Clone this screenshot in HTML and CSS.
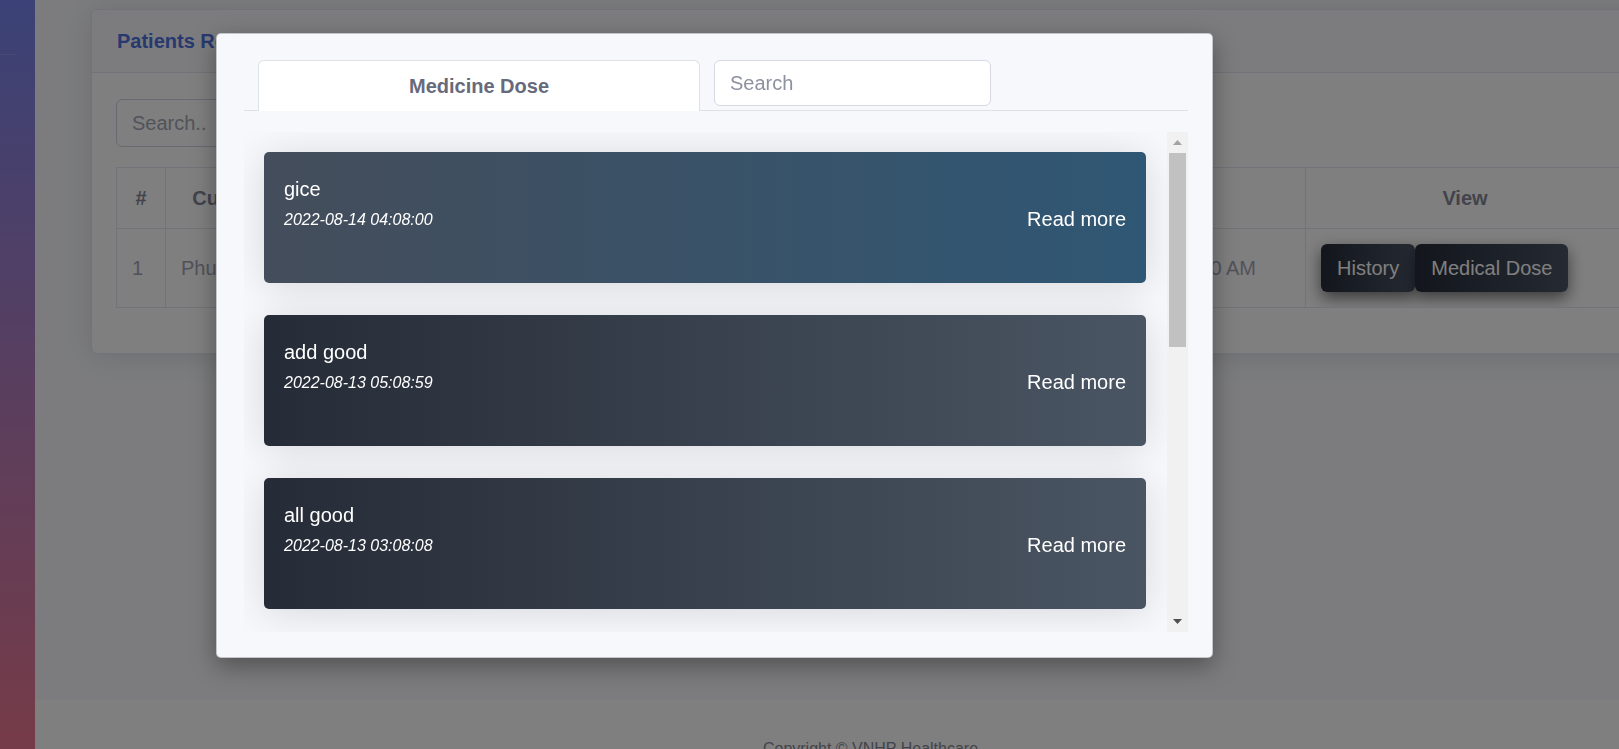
FILE: index.html
```html
<!DOCTYPE html>
<html lang="en">
<head>
<meta charset="utf-8">
<title>Patients Records</title>
<link rel="stylesheet" href="styles.css">
</head>
<body>
<div class="page">
  <aside class="sidebar"><hr class="sidebar-divider"></aside>
  <div class="main">
    <div class="content">
      <div class="card">
        <div class="card-header"><h6 class="card-title">Patients Records</h6></div>
        <div class="card-body">
          <input class="search-main" type="text" placeholder="Search..">
          <table class="table">
            <colgroup>
              <col class="col-idx"><col class="col-name"><col class="col-phone"><col class="col-date"><col class="col-view">
            </colgroup>
            <thead>
              <tr><th>#</th><th>Customer</th><th>Phone Number</th><th>Date</th><th>View</th></tr>
            </thead>
            <tbody>
              <tr>
                <td>1</td>
                <td>Phuong</td>
                <td>0901234567</td>
                <td>14/08/2022 10:08:00 AM</td>
                <td><div class="btn-group"><button class="btn">History</button><button class="btn">Medical Dose</button></div></td>
              </tr>
            </tbody>
          </table>
        </div>
      </div>
    </div>
    <footer class="footer"><span class="copyright">Copyright © VNHP Healthcare</span></footer>
  </div>
</div>

<div class="backdrop"></div>

<div class="modal">
  <div class="modal-nav">
    <div class="tab">Medicine Dose</div>
    <input class="modal-search" type="text" placeholder="Search">
  </div>
  <div class="dose-scroll">
    <div class="dose-list">
      <div class="dose-card dose-card--accent">
        <div class="dose-info"><div class="dose-title">gice</div><div class="dose-date">2022-08-14 04:08:00</div></div>
        <div class="dose-link">Read more</div>
      </div>
      <div class="dose-card">
        <div class="dose-info"><div class="dose-title">add good</div><div class="dose-date">2022-08-13 05:08:59</div></div>
        <div class="dose-link">Read more</div>
      </div>
      <div class="dose-card">
        <div class="dose-info"><div class="dose-title">all good</div><div class="dose-date">2022-08-13 03:08:08</div></div>
        <div class="dose-link">Read more</div>
      </div>
    </div>
    <div class="scrollbar">
      <div class="sb-btn"><svg width="9" height="5" viewBox="0 0 9 5"><polygon points="0,5 9,5 4.5,0" fill="#a3a3a3"/></svg></div>
      <div class="sb-track"><div class="sb-thumb"></div></div>
      <div class="sb-btn"><svg width="9" height="5" viewBox="0 0 9 5"><polygon points="0,0 9,0 4.5,5" fill="#505050"/></svg></div>
    </div>
  </div>
</div>
</body>
</html>
```
FILE: styles.css
```css
html, body {
  margin: 0;
  padding: 0;
}

body {
  overflow: hidden;
  font-family: "Liberation Sans", Arial, sans-serif;
  background: #f8f9fc;
  color: #858796;
}

.page {
  display: flex;
  width: 1706px;
  min-height: 749px;
}

.sidebar {
  width: 35px;
  flex: none;
  background: linear-gradient(180deg, #7684ee 0%, #f4768a 100%);
}

.sidebar-divider {
  margin: 54px 0 0;
  width: 16px;
  border: 0;
  border-top: 1px solid rgba(255, 255, 255, 0.15);
}

.main {
  width: 1671px;
  display: flex;
  flex-direction: column;
}

.content {
  height: 700px;
  padding-top: 9px;
  box-sizing: border-box;
}

.card {
  margin: 0 56px;
  background: #fff;
  border: 1px solid #e3e6f0;
  border-radius: 6px;
  box-shadow: 0 2px 28px rgba(58, 59, 69, 0.15);
}

.card-header {
  padding: 16px 25px 16px;
  background: #f8f9fc;
  border-bottom: 1px solid #e3e6f0;
  border-radius: 6px 6px 0 0;
}

.card-title {
  margin: 0;
  font-size: 20px;
  line-height: 30px;
  font-weight: 700;
  color: #4e73df;
}

.card-body {
  padding: 26px 24px 25px;
}

.search-main {
  display: block;
  width: 400px;
  height: 48px;
  box-sizing: border-box;
  padding: 0 15px;
  font-family: inherit;
  font-size: 20px;
  border: 1px solid #d1d3e2;
  border-radius: 6px;
  color: #6e707e;
  background: #fff;
}

.search-main::placeholder {
  color: #a4a6b4;
}

.table {
  width: 100%;
  margin-top: 20px;
  margin-bottom: 20px;
  border-collapse: collapse;
  table-layout: fixed;
  font-size: 20px;
  line-height: 30px;
}

.col-idx { width: 49px; }
.col-name { width: 147px; }
.col-phone { width: 710px; }
.col-date { width: 283px; }
.col-view { width: 319px; }

.table th,
.table td {
  border: 1px solid #e3e6f0;
  padding: 15px;
  vertical-align: middle;
  white-space: nowrap;
  overflow: hidden;
}

.table th {
  text-align: center;
  font-weight: 700;
  color: #858796;
}

.table td {
  text-align: left;
  color: #a2a4b3;
}

.btn-group {
  display: flex;
}

.btn {
  font-family: inherit;
  font-size: 20px;
  line-height: 24px;
  padding: 12px 16px;
  color: #fff;
  border: 0;
  border-radius: 6px;
  background: linear-gradient(90deg, #262c39 0%, #4a5466 100%);
  box-shadow: 0 6px 16px rgba(0, 0, 0, 0.55);
}

.footer {
  flex: 1;
  background: #fff;
  padding: 40px 0;
  text-align: center;
}

.copyright {
  font-size: 16px;
  line-height: 1;
  color: #858796;
}

/* modal */
.backdrop {
  position: fixed;
  inset: 0;
  background: rgba(0, 0, 0, 0.5);
}

.modal {
  position: fixed;
  left: 216px;
  top: 33px;
  width: 997px;
  height: 625px;
  box-sizing: border-box;
  padding: 26px 24px 25px 27px;
  display: flex;
  flex-direction: column;
  background: #f7f8fc;
  border: 1px solid rgba(0, 0, 0, 0.2);
  border-radius: 5px;
  box-shadow: 0 8px 24px rgba(0, 0, 0, 0.35);
}

.modal-nav {
  display: flex;
  align-items: flex-start;
  gap: 14px;
  height: 50px;
  padding-left: 14px;
  border-bottom: 1px solid #dee2e6;
}

.tab {
  width: 442px;
  height: 51px;
  box-sizing: border-box;
  margin-bottom: -1px;
  display: flex;
  align-items: center;
  justify-content: center;
  background: #fff;
  border: 1px solid #dee2e6;
  border-bottom: 0;
  border-radius: 6px 6px 0 0;
  font-size: 20px;
  font-weight: 700;
  color: #676a7b;
}

.modal-search {
  width: 277px;
  height: 46px;
  box-sizing: border-box;
  padding: 0 15px;
  font-family: inherit;
  font-size: 20px;
  border: 1px solid #d6d8e4;
  border-radius: 6px;
  background: #fff;
  color: #495057;
}

.modal-search::placeholder {
  color: #8e91a0;
}

.dose-scroll {
  margin-top: 21px;
  height: 500px;
  display: flex;
}

.dose-list {
  flex: 1;
  overflow: hidden;
  padding: 20px 21px 0 20px;
}

.dose-card {
  height: 131px;
  box-sizing: border-box;
  margin-bottom: 32px;
  padding: 22px 20px 20px;
  display: flex;
  justify-content: space-between;
  align-items: center;
  border-radius: 5px;
  color: #fff;
  background: linear-gradient(90deg, #262c37 0%, #4a5563 100%);
  box-shadow: 0 4px 40px rgba(0, 0, 0, 0.13);
}

.dose-card--accent {
  background: linear-gradient(90deg, #444d5b 0%, #2f5774 100%);
}

.dose-info {
  align-self: flex-start;
}

.dose-title {
  font-size: 20px;
  line-height: 30px;
}

.dose-date {
  margin-top: 4px;
  font-size: 16px;
  line-height: 24px;
  font-style: italic;
}

.dose-link {
  font-size: 20px;
  line-height: 30px;
}

.scrollbar {
  width: 21px;
  flex: none;
  display: flex;
  flex-direction: column;
  background: #f1f1f1;
}

.sb-btn {
  height: 21px;
  flex: none;
  display: flex;
  align-items: center;
  justify-content: center;
}

.sb-btn svg {
  display: block;
}

.sb-track {
  flex: 1;
  padding: 0 2px;
}

.sb-thumb {
  height: 194px;
  background: #c1c1c1;
}
```
